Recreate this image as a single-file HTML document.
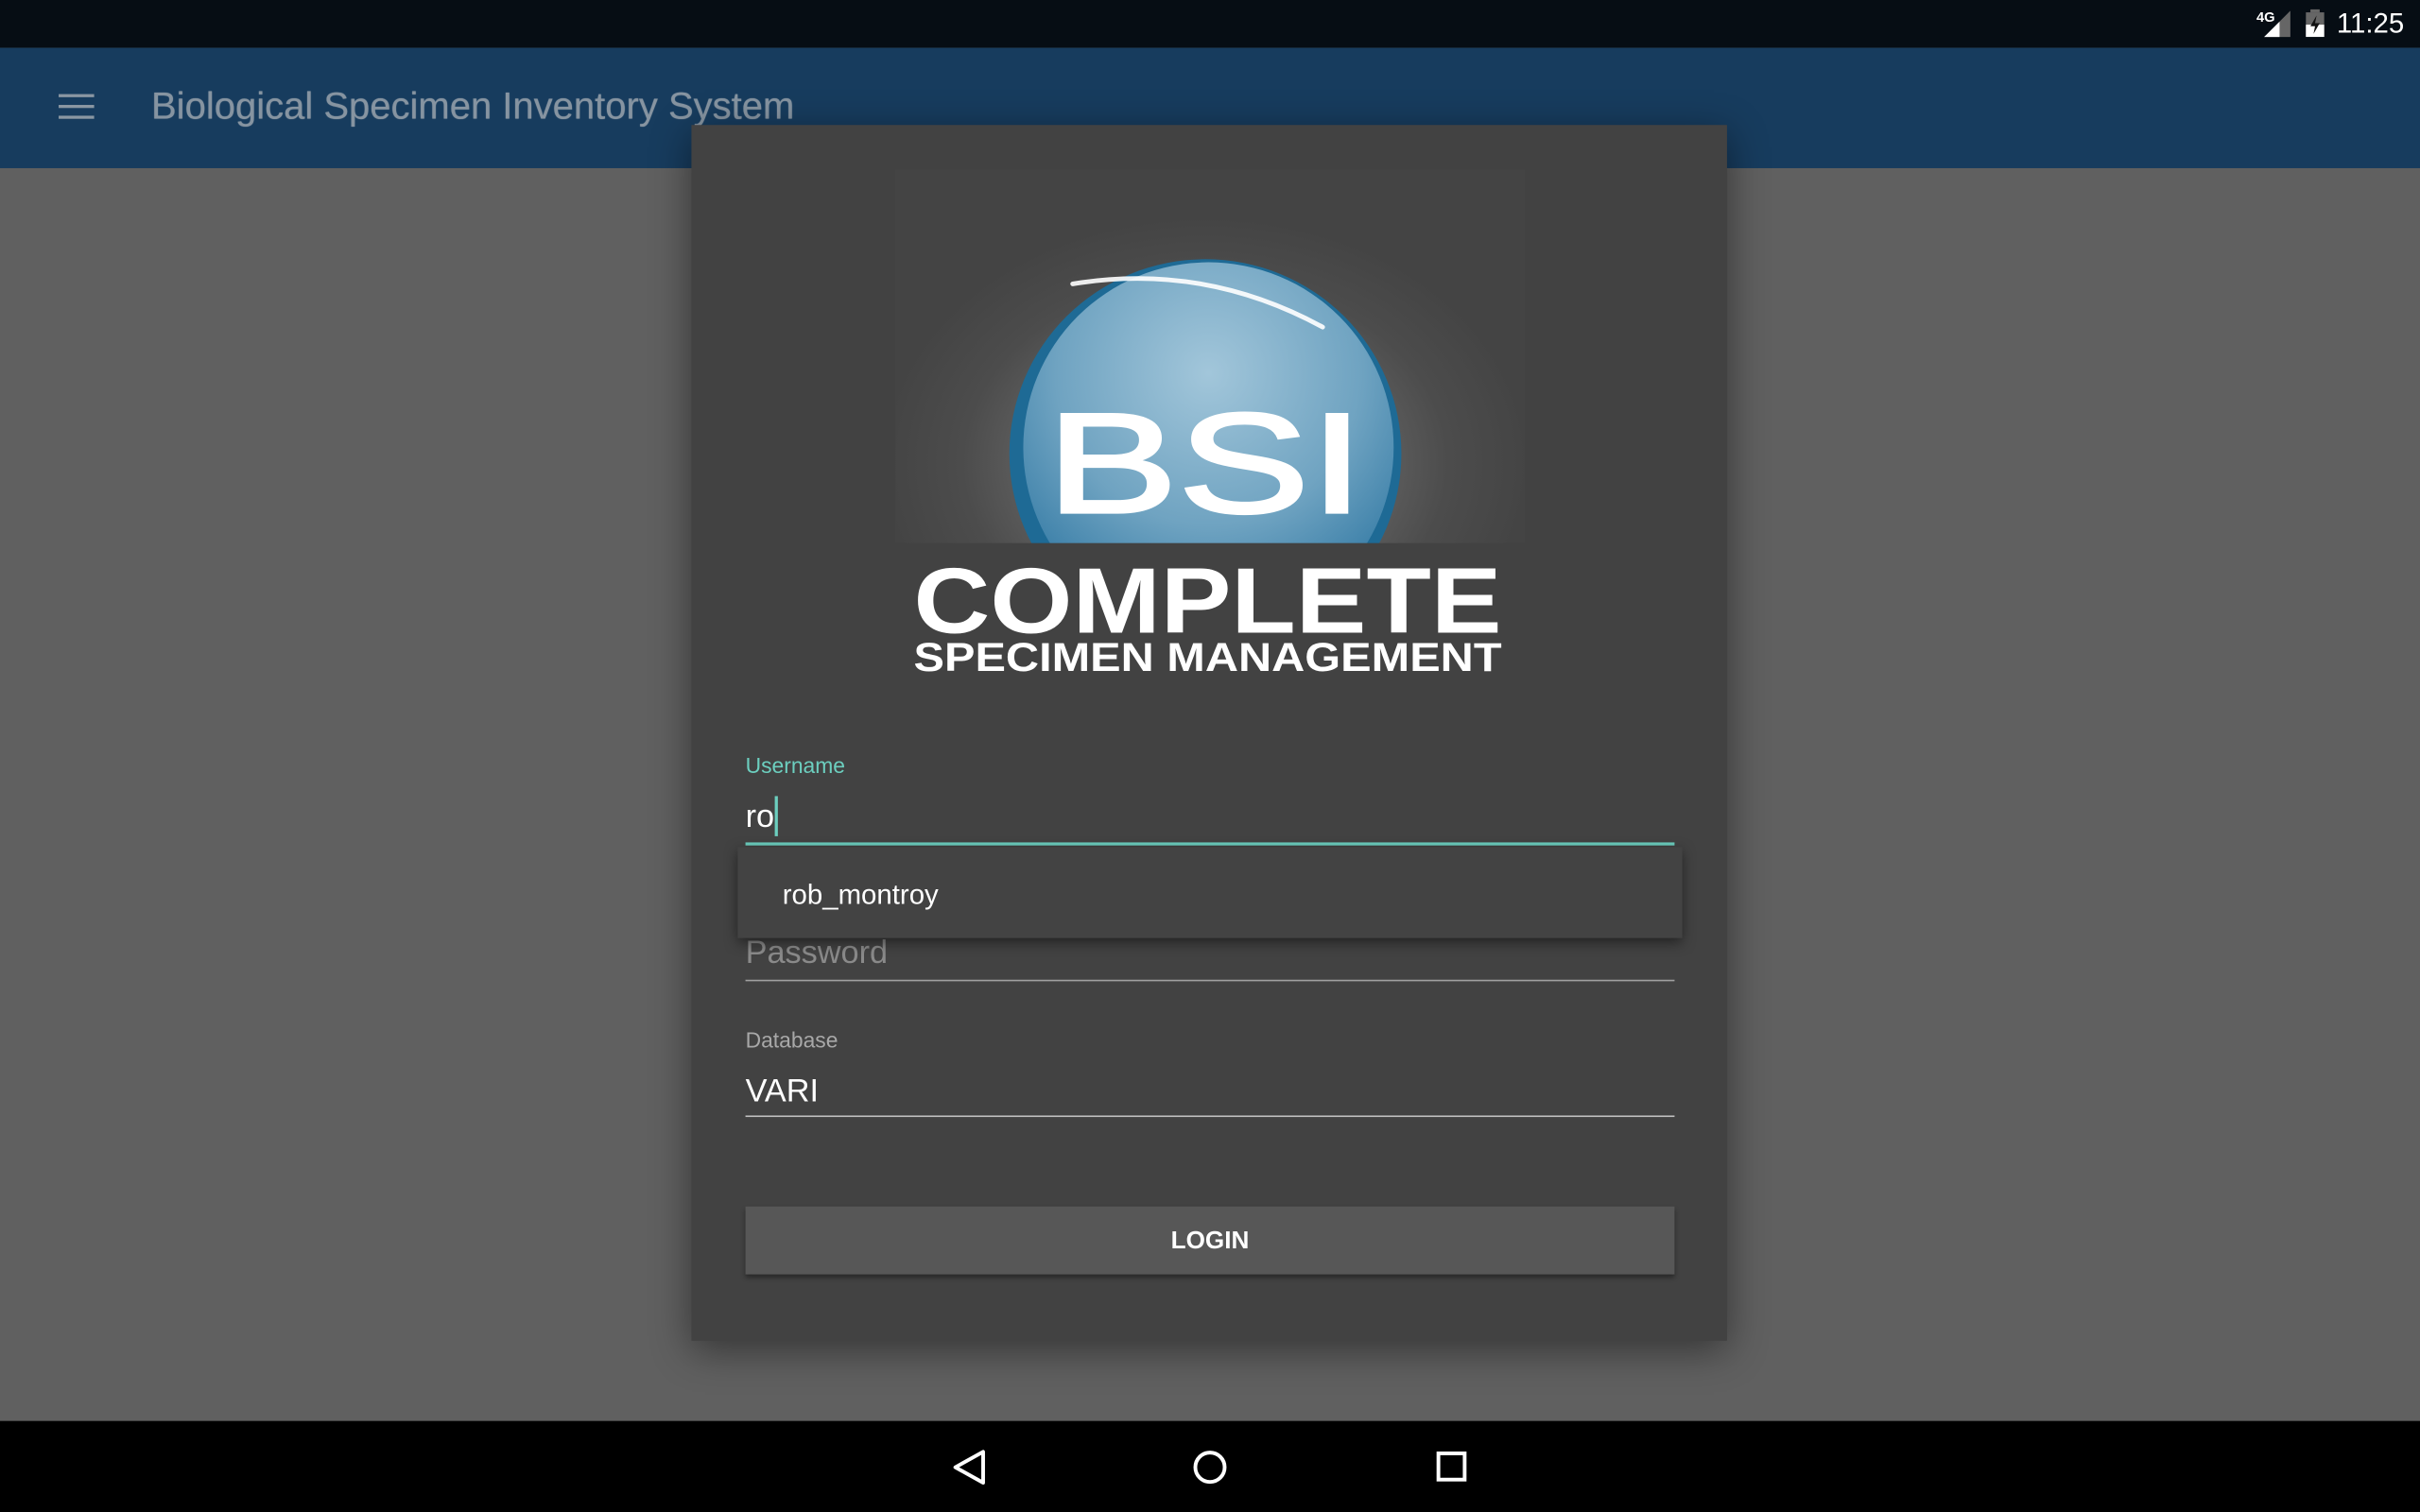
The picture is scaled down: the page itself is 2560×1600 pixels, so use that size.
<!DOCTYPE html>
<html><head><meta charset="utf-8"><style>
*{margin:0;padding:0;box-sizing:border-box}
html,body{width:2560px;height:1600px;overflow:hidden;background:#5f5f5f}
#s{position:absolute;left:0;top:0;width:1568px;height:980px;transform:scale(1.632653);transform-origin:0 0;font-family:"Liberation Sans",Roboto,sans-serif;background:#606060}
.a{position:absolute}
</style></head><body><div id="s">
<div class="a" style="left:0;top:0;width:1568px;height:31px;background:#060d14"></div>
<div class="a" style="left:1462px;top:6px;color:#fff;font-size:9px;font-weight:bold">4G</div>
<svg class="a" style="left:1466px;top:7px" width="20" height="18"><polygon points="18,0 18,17 1,17" fill="#666"/><polygon points="11,7 11,17 1,17" fill="#fff"/></svg>
<svg class="a" style="left:1494px;top:6px" width="12" height="18"><rect x="3" y="0" width="6" height="2" fill="#666"/><rect x="0" y="2" width="12" height="16" fill="#666"/><rect x="0" y="10" width="12" height="8" fill="#fff"/><polygon points="7,4 3,11 6,11 5,16 9,9 6,9" fill="#111"/></svg>
<div class="a" style="left:1514px;top:5px;color:#fff;font-size:18px">11:25</div>
<div class="a" style="left:0;top:31px;width:1568px;height:78px;background:#173c5e"></div>
<div class="a" style="left:38px;top:61px;width:23px;height:2px;background:#8a97a3;box-shadow:0 7px 0 #8a97a3,0 14px 0 #8a97a3"></div>
<div class="a" style="left:98px;top:56px;color:#8694a1;font-size:24.5px;text-shadow:0 0 0.6px #8694a1">Biological Specimen Inventory System</div>
<div class="a" style="left:0;top:921px;width:1568px;height:59px;background:#000"></div>
<svg class="a" style="left:610px;top:934px" width="350" height="34" fill="none" stroke="#fff" stroke-width="2.4"><polygon points="27,7 27,27 9,17" stroke-linejoin="round"/><circle cx="174" cy="17" r="9.5"/><rect x="322" y="8" width="17" height="17"/></svg>

<div class="a" style="left:448px;top:81px;width:671px;height:788px;background:#424242;box-shadow:0 6px 24px rgba(0,0,0,.45)"></div>
<div class="a" style="left:580px;top:110px;width:408px;height:243px;background:radial-gradient(ellipse 210px 160px at 201px 190px,#8a8a8a 0%,#6a6a6a 40%,#4c4c4c 75%,#444 100%)"></div>
<svg class="a" style="left:580px;top:110px" width="408" height="243">
<defs><radialGradient id="g" cx="0.5" cy="0.3" r="0.75"><stop offset="0" stop-color="#a2c6da"/><stop offset="0.55" stop-color="#6fa3c1"/><stop offset="0.85" stop-color="#3f82aa"/><stop offset="1" stop-color="#1f6d99"/></radialGradient></defs>
<ellipse cx="201" cy="184" rx="127" ry="126" fill="#1e6a95"/>
<ellipse cx="203" cy="180" rx="120" ry="120" fill="url(#g)"/>
<path d="M115 74 Q200 60 277 102" stroke="#fff" stroke-width="3" fill="none" stroke-linecap="round" opacity=".9"/>
<text x="201" y="222" text-anchor="middle" font-family="Liberation Sans,sans-serif" font-size="92" fill="#fff" stroke="#fff" stroke-width="2" textLength="206" lengthAdjust="spacingAndGlyphs">BSI</text>
</svg>
<div class="a" style="left:580px;top:352px;width:408px;height:2px;background:#424242"></div>
<svg class="a" style="left:588px;top:358px" width="390" height="82"><text x="4" y="52" font-family="Liberation Sans,sans-serif" font-size="60" font-weight="bold" fill="#fff" textLength="381" lengthAdjust="spacingAndGlyphs">COMPLETE</text><text x="4" y="77" font-family="Liberation Sans,sans-serif" font-size="26" font-weight="bold" fill="#fff" textLength="381" lengthAdjust="spacingAndGlyphs">SPECIMEN MANAGEMENT</text></svg>

<div class="a" style="left:483px;top:488px;color:#6ccfbf;font-size:14px">Username</div>
<div class="a" style="left:483px;top:518px;color:#fff;font-size:21px">ro</div>
<div class="a" style="left:502px;top:516px;width:2px;height:26px;background:#6ccfbf"></div>
<div class="a" style="left:483px;top:546px;width:602px;height:2px;background:#6ccfbf"></div>
<div class="a" style="left:483px;top:606px;color:#8a8a8a;font-size:21px">Password</div>
<div class="a" style="left:483px;top:635px;width:602px;height:1px;background:#a0a0a0"></div>
<div class="a" style="left:478px;top:549px;width:612px;height:59px;background:#434343;box-shadow:0 3px 8px rgba(0,0,0,.5)"></div>
<div class="a" style="left:507px;top:570px;color:#fff;font-size:18px">rob_montroy</div>
<div class="a" style="left:483px;top:666px;color:#a8a8a8;font-size:14px">Database</div>
<div class="a" style="left:483px;top:696px;color:#fff;font-size:21px">VARI</div>
<div class="a" style="left:483px;top:723px;width:602px;height:1px;background:#bdbdbd"></div>
<div class="a" style="left:483px;top:782px;width:602px;height:44px;background:#575757;box-shadow:0 2px 3px rgba(0,0,0,.4);color:#fff;font-size:16px;font-weight:bold;text-align:center;line-height:46px">LOGIN</div>
</div></body></html>
